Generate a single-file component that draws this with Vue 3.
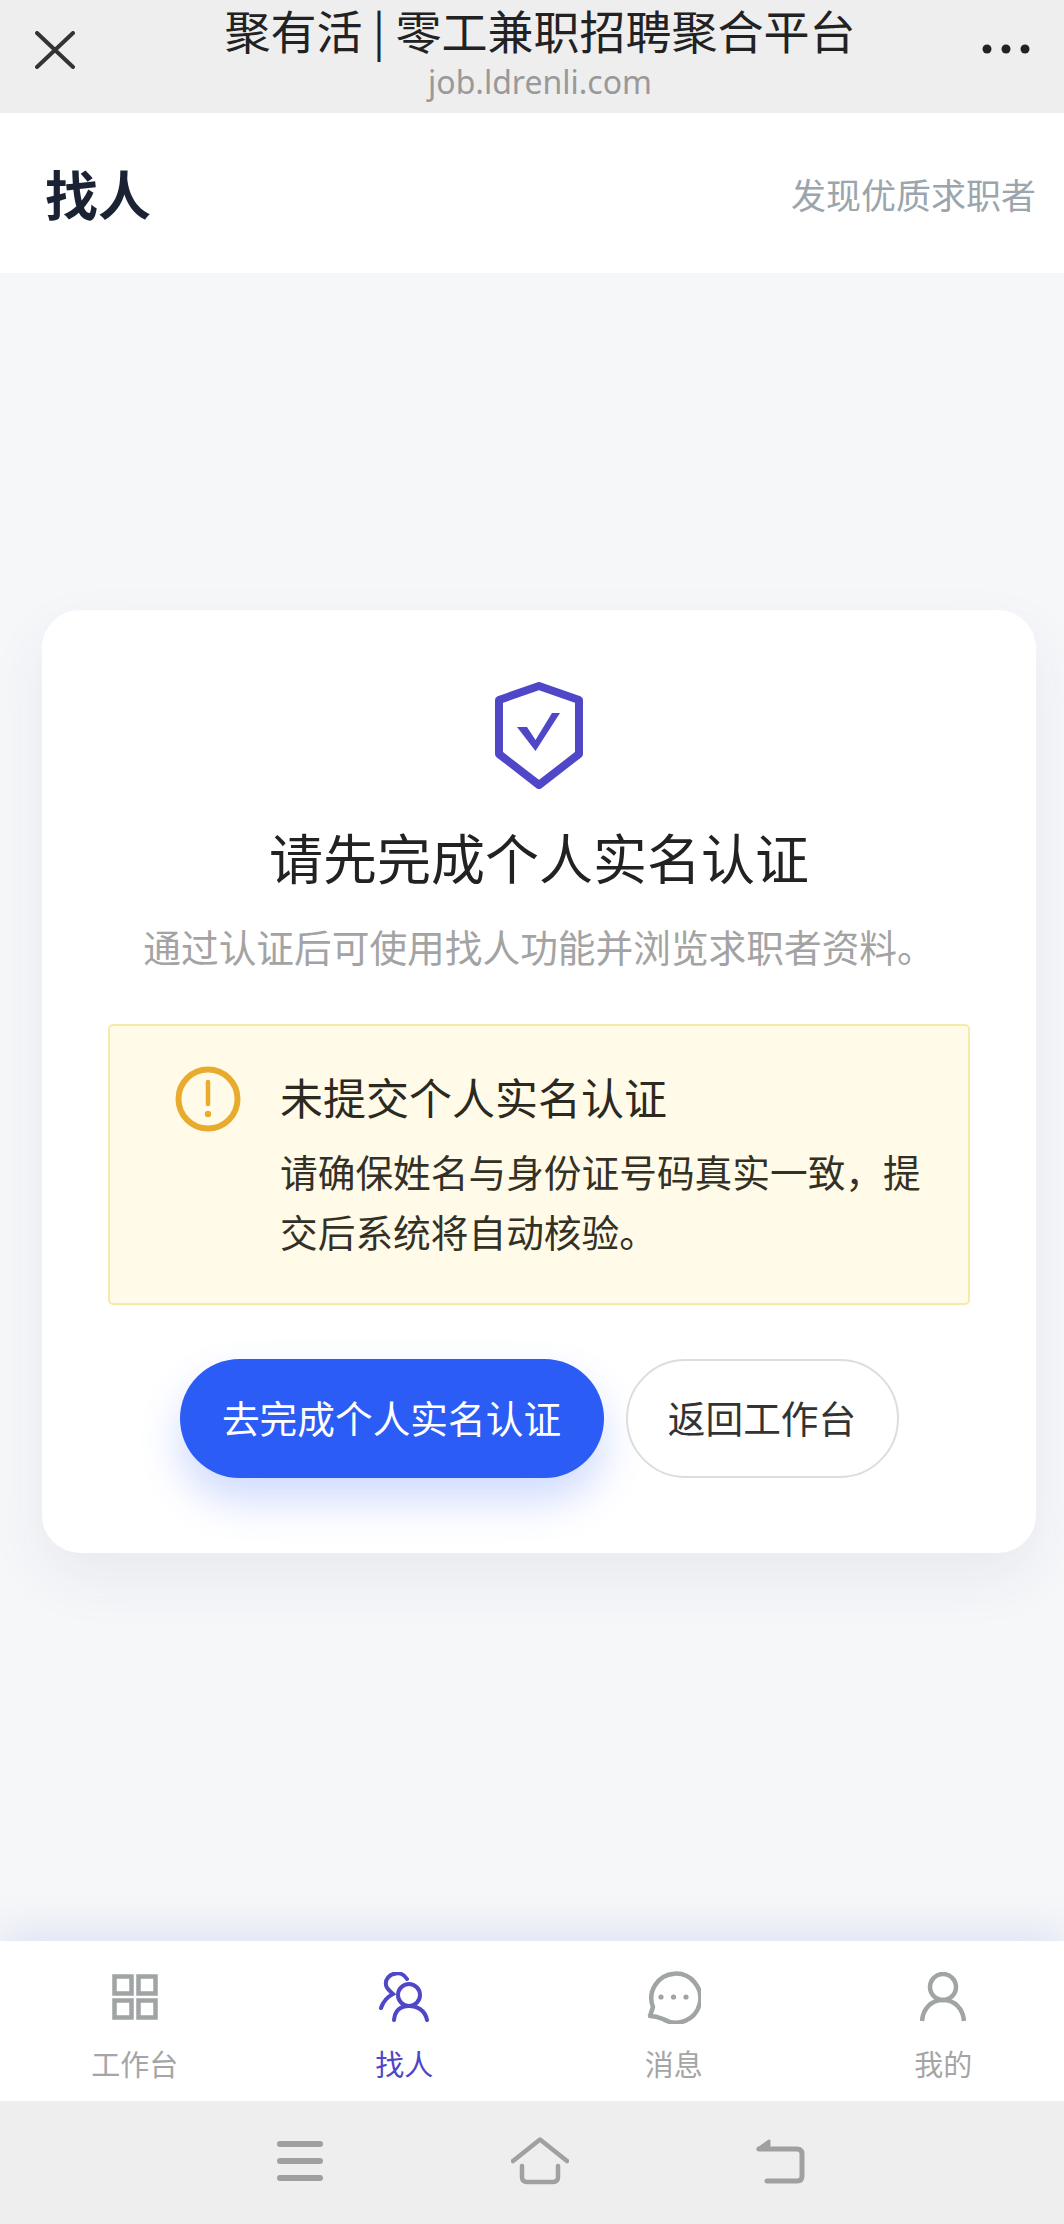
<template>
  <div class="page">
    <!-- Browser bar -->
    <div class="topbar">
      <svg class="close-icon" width="40" height="38" viewBox="0 0 40 38">
        <path d="M2 2 L38 36 M38 2 L2 36" fill="none" stroke="#333" stroke-width="4" stroke-linecap="round" />
      </svg>
      <div class="topbar-center">
        <div class="site-title">聚有活 | 零工兼职招聘聚合平台</div>
        <div class="site-url">job.ldrenli.com</div>
      </div>
      <svg class="more-icon" width="48" height="10" viewBox="0 0 48 10">
        <circle cx="5" cy="5" r="4.5" fill="#222" />
        <circle cx="24" cy="5" r="4.5" fill="#222" />
        <circle cx="43" cy="5" r="4.5" fill="#222" />
      </svg>
    </div>

    <!-- Page header -->
    <div class="header">
      <h1 class="header-title">找人</h1>
      <span class="header-hint">发现优质求职者</span>
    </div>

    <!-- Main -->
    <div class="main">
      <div class="card">
        <svg class="shield" width="88" height="108" viewBox="0 0 88 108">
          <path d="M44 4 L84 18 V72 L44 103 L4 72 V18 Z" fill="none" stroke="#4f46c8" stroke-width="8" stroke-linejoin="round" />
          <path d="M22 45 L32 45 L40.500 58 L57 31 L65 31 L40.500 69 Z" fill="#4f46c8" />
        </svg>
        <h2 class="card-title">请先完成个人实名认证</h2>
        <p class="card-sub">通过认证后可使用找人功能并浏览求职者资料。</p>

        <div class="notice">
          <svg class="notice-icon" width="66" height="66" viewBox="0 0 66 66">
            <circle cx="33" cy="33" r="29.500" fill="none" stroke="#e8ab2e" stroke-width="6" />
            <path d="M33 16 V38" stroke="#e8ab2e" stroke-width="4.5" stroke-linecap="round" />
            <circle cx="33" cy="48" r="3.2" fill="#e8ab2e" />
          </svg>
          <div class="notice-body">
            <div class="notice-title">未提交个人实名认证</div>
            <div class="notice-text">请确保姓名与身份证号码真实一致，提交后系统将自动核验。</div>
          </div>
        </div>

        <div class="actions">
          <button class="btn btn-primary">去完成个人实名认证</button>
          <button class="btn btn-ghost">返回工作台</button>
        </div>
      </div>
    </div>

    <!-- Tabs -->
    <div class="tabbar">
      <div class="tab">
        <div class="tab-icon">
          <svg width="46" height="46" viewBox="0 0 46 46" fill="none" stroke="#a0a4a4" stroke-width="4.5">
            <rect x="2.5" y="2.5" width="17" height="17" />
            <rect x="26.5" y="2.5" width="17" height="17" />
            <rect x="2.5" y="26.5" width="17" height="17" />
            <rect x="26.5" y="26.5" width="17" height="17" />
          </svg>
        </div>
        <span class="tab-label">工作台</span>
      </div>
      <div class="tab tab-active">
        <div class="tab-icon">
          <svg width="50" height="50" viewBox="0 0 50 50" fill="none" stroke="#4f46c8" stroke-width="4" stroke-linecap="round">
            <circle cx="30" cy="23" r="11" />
            <path d="M15 48 C16 38 22 34 30 34 C38 34 46 38 48 48" />
            <path d="M28 7 C25 2 20 1 17 1.5 C10 2 6 8 7 13 C7.5 17 11 19 14 22 C8 25 4 30 2 36" />
          </svg>
        </div>
        <span class="tab-label">找人</span>
      </div>
      <div class="tab">
        <div class="tab-icon">
          <svg width="54" height="54" viewBox="0 0 54 54" fill="none" stroke="#a0a4a4" stroke-width="4.5" stroke-linejoin="round">
            <path d="M3 46 L6 37 A24.5 24.5 0 1 1 16 49 Q9 46 3 46 Z" />
            <g fill="#a0a4a4" stroke="none">
              <circle cx="14" cy="27" r="2.6" />
              <circle cx="26.500" cy="27" r="2.6" />
              <circle cx="39" cy="27" r="2.6" />
            </g>
          </svg>
        </div>
        <span class="tab-label">消息</span>
      </div>
      <div class="tab">
        <div class="tab-icon">
          <svg width="46" height="50" viewBox="0 0 46 50" fill="none" stroke="#a0a4a4" stroke-width="4.5">
            <circle cx="23" cy="15" r="13" />
            <path d="M2 49 C3 37 11 28 23 28 C35 28 43 37 44 49" />
          </svg>
        </div>
        <span class="tab-label">我的</span>
      </div>
    </div>

    <!-- System navigation -->
    <div class="sysbar">
      <svg width="46" height="42" viewBox="0 0 46 42" stroke="#a0a0a0" stroke-width="6" stroke-linecap="round">
        <path d="M3 4 H43 M3 21 H43 M3 38 H43" />
      </svg>
      <svg width="58" height="48" viewBox="0 0 58 48" fill="none" stroke="#a0a0a0" stroke-width="4.5" stroke-linecap="round" stroke-linejoin="round">
        <path d="M2 24 L29 2.500 L56 24" />
        <path d="M11 29 V40 Q11 45 16 45 H42 Q47 45 47 40 V29" />
      </svg>
      <svg width="50" height="46" viewBox="0 0 50 46" fill="none" stroke="#a0a0a0" stroke-width="5" stroke-linecap="round" stroke-linejoin="round">
        <path d="M4 11 H42 Q47 11 47 16 V38 Q47 43 42 43 H12" />
        <path d="M3 11 L14 3 V11 Z" fill="#a0a0a0" stroke-width="3" />
      </svg>
    </div>
  </div>
</template>

<script setup>
</script>

<style>
html, body {
  margin: 0;
  background: #f6f7f9;
}
</style>

<style scoped>
.page {
  display: flex;
  flex-direction: column;
  height: 2224px;
  overflow: hidden;
  font-family: "Noto Sans CJK SC", "Noto Sans", sans-serif;
  background: #f6f7f9;
}

.topbar {
  display: grid;
  grid-template-columns: 100px 1fr 100px;
  align-items: center;
  height: 113px;
  background: #eeeeee;
}

.close-icon {
  margin-left: 35px;
  margin-top: -14px;
}

.more-icon {
  justify-self: end;
  margin-right: 34px;
  margin-top: -16px;
}

.topbar-center {
  align-self: start;
  padding: 2px 0 0 16px;
  text-align: center;
}

.site-title {
  font-size: 46px;
  line-height: 54px;
  color: #222;
  white-space: nowrap;
}

.site-url {
  font-family: "Noto Sans", sans-serif;
  font-size: 32px;
  line-height: 44px;
  margin-top: 4px;
  color: #999;
}

.header {
  display: flex;
  align-items: center;
  justify-content: space-between;
  height: 160px;
  padding: 0 28px 0 45px;
  background: #fff;
}

.header-title {
  margin: 0;
  font-size: 53px;
  font-weight: 700;
  color: #1a2233;
}

.header-hint {
  font-size: 35px;
  color: #9aa5ad;
}

.main {
  flex: 1;
  padding: 337px 28px 0 42px;
}

.card {
  display: flex;
  flex-direction: column;
  align-items: center;
  padding: 72px 66px 75px;
  background: #fff;
  border-radius: 38px;
  box-shadow: 0 24px 60px rgba(40, 60, 110, 0.07);
}

.shield {
  display: block;
}

.card-title {
  margin: 31px 0 0;
  font-size: 54px;
  font-weight: 400;
  line-height: 72px;
  color: #222;
  white-space: nowrap;
}

.card-sub {
  margin: 27px 0 3px;
  font-size: 37.700px;
  line-height: 52px;
  color: #a3a3a3;
  white-space: nowrap;
}

.notice {
  display: flex;
  align-items: flex-start;
  gap: 39px;
  box-sizing: border-box;
  width: 100%;
  height: 281px;
  margin-top: 49px;
  padding: 40px 40px 0 65px;
  background: #fffbe8;
  border: 2px solid #f6eaa8;
  border-radius: 5px;
}

.notice-icon {
  flex: none;
}

.notice-title {
  font-size: 43px;
  line-height: 60px;
  color: #2c2a20;
}

.notice-text {
  margin-top: 15px;
  font-size: 37.700px;
  line-height: 60px;
  color: #333126;
}

.actions {
  display: flex;
  justify-content: center;
  gap: 22px;
  margin-top: 54px;
}

.btn {
  box-sizing: border-box;
  height: 119px;
  border-radius: 60px;
  font-family: inherit;
  font-size: 37.700px;
  white-space: nowrap;
}

.btn-primary {
  width: 424px;
  padding: 0 0 5px;
  color: #fff;
  background: #2b5cf6;
  border: none;
  box-shadow: 0 22px 42px rgba(43, 92, 246, 0.22);
}

.btn-ghost {
  width: 273px;
  padding: 0 0 5px;
  color: #333;
  background: #fff;
  border: 2px solid #ddd;
}

.tabbar {
  position: relative;
  display: grid;
  grid-template-columns: repeat(4, 269.500px);
  height: 160px;
  background: #fff;
  box-shadow: 0 -12px 36px rgba(90, 110, 220, 0.14);
}

.tab {
  display: flex;
  flex-direction: column;
  align-items: center;
  padding-top: 29px;
  color: #a5a5a5;
}

.tab-icon {
  display: flex;
  align-items: center;
  justify-content: center;
  height: 54px;
}

.tab-label {
  margin-top: 19px;
  font-size: 29px;
  line-height: 40px;
}

.tab-active {
  color: #4f46c8;
}

.sysbar {
  position: relative;
  display: grid;
  grid-template-columns: repeat(3, 240px);
  justify-content: center;
  justify-items: center;
  align-items: center;
  flex: none;
  height: 123px;
  padding: 0 0 4px 16px;
  box-sizing: border-box;
  background: #eeeeee;
}
</style>
